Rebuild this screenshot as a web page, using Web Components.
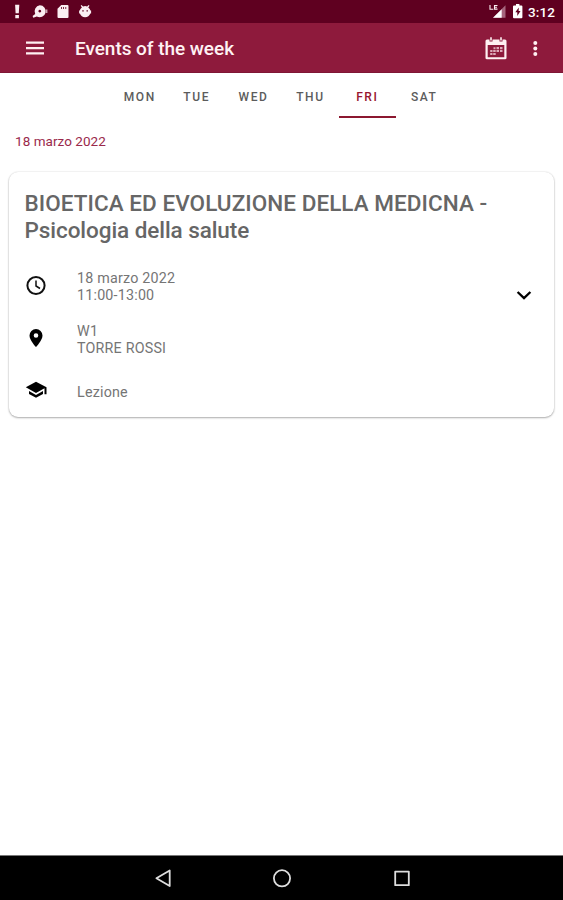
<!DOCTYPE html>
<html lang="it">
<head>
<meta charset="utf-8">
<title>Events of the week</title>
<style>
html,body{margin:0;height:100%;background:#fff}
body{font-family:Roboto,"Liberation Sans",sans-serif;overflow:hidden}
</style>
</head>
<body>
<events-screen></events-screen>
<script>
const define = (name, html) => {
  const t = document.createElement('template');
  t.innerHTML = html;
  customElements.define(name, class extends HTMLElement {
    constructor() {
      super();
      this.attachShadow({ mode: 'open' }).append(t.content.cloneNode(true));
    }
  });
};

define('status-bar', `
<style>
:host{display:flex;align-items:center;height:23px;background:#5f0020;color:#fff;padding:0 8px 0 9px;box-sizing:border-box}
svg{display:block;flex:none}
.grow{flex:1}
span{font-size:13.5px;font-weight:500;line-height:24px;letter-spacing:.1px;margin-left:5px}
</style>
<svg width="90" height="23" viewBox="9 0 90 23" fill="#fbeef2">
  <path d="M15.100 4.700h4.200l-.5 8.500h-3.200zM15.300 15h3.600v3.200h-3.600z"/>
  <path fill-rule="evenodd" d="M39.800 5.300a6 6 0 1 1-3 11.200l-3.500 1.200-.7-1.600 2.600-2.200a6 6 0 0 1 4.600-8.600zM39.800 9.700a1.400 1.400 0 1 0 .01 0z"/><path d="M46.300 9.500h1v3.500h-1z"/>
  <path fill-rule="evenodd" d="M61.300 5h6.200q1 0 1 1v11q0 1-1 1h-9q-1 0-1-1V8.700zM61 7v2h.8V7zm2.200 0v2h.8V7zm2.200 0v2h.8V7z"/>
  <path fill-rule="evenodd" d="M81.500 5l1.600 1.400a6 6 0 0 1 4 0L88.700 5l.8.8-1.200 1.600q1.900 1.300 2.100 3.100h.7v3h-.8a5.500 5.500 0 0 1-10.400 0h-.8v-3h.7q.2-1.800 2.100-3.100l-1.200-1.600zM82.300 10.200v1.400h1.400v-1.400zm4.200 0v1.400h1.400v-1.400z"/>
</svg>
<div class="grow"></div>
<svg width="36" height="23" viewBox="487 0 36 23">
  <path fill="none" stroke="#fbeef2" stroke-width="1.100" d="M490 5v4.200h3.300M497.500 5.500h-3v3.600h3M494.500 7.300h2.500"/>
  <path fill="#a5657d" d="M505.500 5.300v12.400H493z"/><path fill="#fff" d="M501.700 9.200v8.500H493z"/>
  <path fill="#fff" d="M516 4h3.400v1.400h2q1 0 1 1v10.800q0 1-1 1H514q-1 0-1-1V6.400q0-1 1-1h2z"/>
  <path fill="#5f0020" d="M518.800 7.500l-3.500 4.700h2v3.800l3.200-5h-1.900z"/>
</svg>
<span>3:12</span>`);

define('app-bar', `
<style>
:host{display:flex;align-items:center;height:50px;background:#8e1a3c;color:#fff;box-sizing:border-box;border-bottom:1px solid #7f1635}
svg{display:block;flex:none}
h1{flex:1;margin:0 0 0 21px;font-size:19px;font-weight:500;line-height:49px;padding-top:2px;letter-spacing:-.040px;color:#fff2f4}
</style>
<svg width="54" height="49" viewBox="0 23 54 49" fill="#fff0f2"><path d="M26 41.400h18v2.300H26zM26 46.900h18v2.300H26zM26 52.300h18v2.300H26z"/></svg>
<h1><slot></slot></h1>
<svg width="83" height="49" viewBox="480 23 83 49" fill="#fff0f2">
  <path fill-rule="evenodd" d="M487 39.500h2.500v2h3v-2h7v2h3v-2h2.500q1.500 0 1.500 1.500v17q0 1.300-1.500 1.300h-18q-1.500 0-1.500-1.300V41q0-1.500 1.500-1.500zM487.700 45v12.200h16.600V45z"/>
  <path d="M490.200 37.200h1.600v3.400h-1.600zM500.200 37.200h1.600v3.400h-1.600z"/>
  <path fill="#dda9b8" d="M493.500 47.300h2v2h-2zM496.500 47h2.500v2.200h-2.500zM500 47h2.500v2.200H500zM490.200 50h2.300v2h-2.300zM493.200 50h2.500v2h-2.500zM496.500 50h2.500v2h-2.500zM500 50h2.500v2H500zM490.200 53h2.300v2h-2.300zM493.200 53h2.500v2h-2.500z"/>
  <circle cx="535.300" cy="43" r="2"/><circle cx="535.300" cy="48.500" r="2"/><circle cx="535.300" cy="54" r="2"/>
</svg>`);

define('day-tabs', `
<style>
:host{display:grid;grid-template-columns:repeat(6,56.900px);justify-content:center;height:45px;padding-left:1px}
</style><slot></slot>`);

define('day-tab', `
<style>
:host{display:block;text-align:center;box-sizing:border-box;height:45px;font-size:12px;font-weight:500;line-height:48px;letter-spacing:1.600px;color:#5c5c5c;border-bottom:2px solid transparent}
:host([selected]){color:#98152f;border-color:#8c1830}
</style><slot></slot>`);

define('date-heading', `
<style>:host{display:block;padding:14px 15px 0;font-size:13.500px;line-height:18px;letter-spacing:.040px;color:#9a294b}</style><slot></slot>`);

define('event-card', `
<style>
:host{display:block;margin:22px 9px 0;height:245px;box-sizing:border-box;background:#fff;border-radius:9px;padding:18px 15px 0 15.500px;box-shadow:0 1px 2px rgba(0,0,0,.3),0 0 2px rgba(0,0,0,.14)}
h2{margin:0;font-size:22.500px;font-weight:500;line-height:27px;color:#666;white-space:nowrap}
.first{letter-spacing:.060px}
.body{display:grid;grid-template-columns:1fr 30px}
.rows{display:block;padding-top:26px}
svg{display:block;margin-top:36px}
</style>
<h2><slot name="title"></slot></h2>
<div class="body"><div class="rows"><slot></slot></div>
<svg width="30" height="30" viewBox="0 0 30 30"><path d="M8.600 12l6.400 6.200 6.400-6.200" fill="none" stroke="#000" stroke-width="2.300"/></svg></div>`);

define('event-row', `
<style>
:host{display:grid;grid-template-columns:22px 1fr;column-gap:30.500px;align-items:center;min-height:34px;font-size:14.300px;line-height:17px;letter-spacing:.200px;color:#757575;margin-bottom:18.500px}
::slotted(svg){display:block}
</style><slot name="icon"></slot><div><slot></slot></div>`);

define('nav-bar', `
<style>
:host{display:block;height:45px;box-sizing:border-box;background:#000;border-top:1px solid #777}
svg{display:block}
</style>
<svg width="563" height="44" viewBox="0 856 563 44" fill="none" stroke="#dedede" stroke-width="1.800" stroke-linejoin="round">
  <path d="M169.700 870.500v15.500l-13.300-7.750z"/><circle cx="282" cy="878.300" r="8.100"/><path d="M395.200 871.600h13.600v13.600h-13.600z"/>
</svg>`);

define('events-screen', `
<style>
:host{display:flex;flex-direction:column;width:563px;height:900px;background:#fff}
main{flex:1;display:block}
.first{letter-spacing:.050px}
.second{letter-spacing:-.070px}
</style>
<status-bar></status-bar>
<app-bar>Events of the week</app-bar>
<main>
  <day-tabs><day-tab>MON</day-tab><day-tab>TUE</day-tab><day-tab>WED</day-tab><day-tab>THU</day-tab><day-tab selected>FRI</day-tab><day-tab>SAT</day-tab></day-tabs>
  <date-heading>18 marzo 2022</date-heading>
  <event-card>
    <span slot="title"><span class="first">BIOETICA ED EVOLUZIONE DELLA MEDICNA -</span><br><span class="second">Psicologia della salute</span></span>
    <event-row><svg slot="icon" width="22" height="24" viewBox="0 0 22 24" fill="none" stroke="#111" stroke-width="2"><circle cx="11" cy="10.500" r="8.600"/><path stroke-width="1.500" d="M11 5.500v5.500l4 2.500"/></svg>18 marzo 2022<br>11:00-13:00</event-row>
    <event-row><svg slot="icon" width="22" height="24" viewBox="0 0 22 24"><path fill="#000" fill-rule="evenodd" d="M11 1a6.500 6.500 0 0 0-6.500 6.500C4.500 12.400 11 19 11 19s6.500-6.600 6.500-11.500A6.500 6.500 0 0 0 11 1zm0 4.200a2.300 2.300 0 1 1 0 4.600 2.300 2.300 0 0 1 0-4.600z"/></svg>W1<br>TORRE ROSSI</event-row>
    <event-row><svg slot="icon" width="22" height="24" viewBox="0 0 22 24"><path fill="#000" d="M11 1.700L.8 7.200l10.200 5.700 8.500-4.700v6h2V7.200zM4 11v2.900l7 3.900 7-3.900V11l-7 3.900z"/></svg>Lezione</event-row>
  </event-card>
</main>
<nav-bar></nav-bar>`);
</script>
</body>
</html>
